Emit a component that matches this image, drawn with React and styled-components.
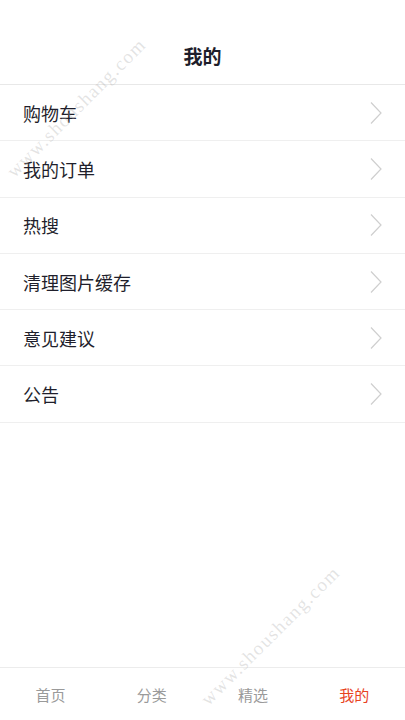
import React from 'react';
import styled, { createGlobalStyle } from 'styled-components';

const GlobalStyle = createGlobalStyle`
  html, body {
    margin: 0;
    padding: 0;
    background: #fff;
  }
  body {
    font-family: "Noto Sans CJK SC", "Noto Sans", sans-serif;
  }
`;

const Page = styled.div`
  position: relative;
  width: 405px;
  height: 720px;
  display: flex;
  flex-direction: column;
  background: #fff;
  overflow: hidden;
`;

const Header = styled.div`
  height: 85px;
  box-sizing: border-box;
  padding-top: 42px;
  display: flex;
  justify-content: center;
  border-bottom: 1px solid #e8e8e8;
`;

const Title = styled.h1`
  margin: 0;
  font-size: 19px;
  line-height: 28px;
  font-weight: 700;
  color: #1d1d2a;
`;

const List = styled.div`
  flex: 1;
`;

const Row = styled.div`
  height: 56.3px;
  box-sizing: border-box;
  display: flex;
  align-items: center;
  justify-content: space-between;
  padding: 0 22px 0 23px;
  border-bottom: 1px solid #efefef;
`;

const Label = styled.span`
  font-size: 18px;
  color: #1f1f2c;
`;

const TabBar = styled.div`
  height: 52px;
  display: grid;
  grid-template-columns: repeat(4, 1fr);
  border-top: 1px solid #ececec;
`;

const Tab = styled.div`
  display: flex;
  align-items: center;
  justify-content: center;
  font-size: 15px;
  color: ${props => (props.active ? '#e8431f' : '#9a9a9a')};
`;

const Watermark = styled.div`
  position: absolute;
  left: ${props => props.x}px;
  top: ${props => props.y}px;
  transform: rotate(-45deg);
  transform-origin: left bottom;
  font-family: "Liberation Serif", serif;
  font-size: 19px;
  letter-spacing: 1.5px;
  color: rgba(175, 175, 175, 0.35);
  pointer-events: none;
  white-space: nowrap;
`;

const Chevron = () => (
  <svg width="14" height="24" viewBox="0 0 14 24">
    <path d="M2 1.5 L12 12 L2 22.5" fill="none" stroke="#cfcfcf" strokeWidth="1.2" />
  </svg>
);

const items = ['购物车', '我的订单', '热搜', '清理图片缓存', '意见建议', '公告'];
const tabs = ['首页', '分类', '精选', '我的'];

export default function App() {
  return (
    <Page>
      <GlobalStyle />
      <Header>
        <Title>我的</Title>
      </Header>
      <List>
        {items.map(item => (
          <Row key={item}>
            <Label>{item}</Label>
            <Chevron />
          </Row>
        ))}
      </List>
      <TabBar>
        {tabs.map((t, i) => (
          <Tab key={t} active={i === 3}>{t}</Tab>
        ))}
      </TabBar>
      <Watermark x={18} y={160}>www.shoushang.com</Watermark>
      <Watermark x={212} y={688}>www.shoushang.com</Watermark>
    </Page>
  );
}
